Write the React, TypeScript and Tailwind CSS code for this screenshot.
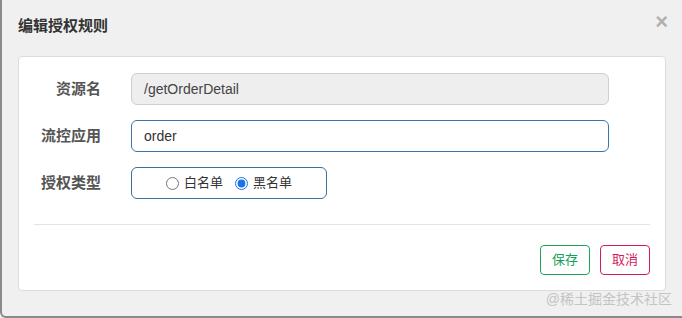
import { useState } from "react";

const FONT = "[font-family:'Liberation_Sans','Noto_Sans_CJK_SC',sans-serif]";

function Row({ label, children }: { label: string; children: React.ReactNode }) {
  return (
    <div className="flex h-8 items-center">
      <label className="w-[67px] shrink-0 text-right text-[15px] font-bold text-[#555]">{label}</label>
      <div className="ml-[30px]">{children}</div>
    </div>
  );
}

export default function App() {
  const [kind, setKind] = useState<"white" | "black">("black");

  return (
    <div className={`${FONT} h-[318px] w-[682px] overflow-hidden bg-[#f0f0f0]`}>
      <div className="relative h-full w-full rounded-bl-[6px] border-b-[2px] border-l-[2px] border-[#8a8a8a] bg-[#f0f0f0]">
        <div className="flex h-[56px] items-start justify-between pl-[16px] pr-[14px] pt-[15px]">
          <h3 className="text-[15px] font-bold leading-[22px] text-[#333]">编辑授权规则</h3>
          <button className="mt-[-4px] text-[22px] leading-none font-bold text-[#b0b0b0]">×</button>
        </div>

        <div className="ml-[16px] w-[648px] rounded-[4px] border border-[#dcdcdc] bg-white px-[15px] pt-[16px]">
          <div className="flex flex-col gap-[15px]">
            <Row label="资源名">
              <input
                readOnly
                value="/getOrderDetail"
                className="h-8 w-[478px] rounded-[6px] border border-[#cfcfcf] bg-[#eeeeee] px-3 text-[14px] text-[#444] outline-none"
              />
            </Row>
            <Row label="流控应用">
              <input
                defaultValue="order"
                className="h-8 w-[478px] rounded-[6px] border border-[#3a74a8] bg-white px-3 text-[14px] text-[#333] outline-none"
              />
            </Row>
            <Row label="授权类型">
              <div className="flex h-8 w-[196px] items-center justify-center gap-[12px] rounded-[6px] border border-[#3a6f9c] text-[13px] text-[#333]">
                <label className="flex items-center gap-[5px]">
                  <input
                    type="radio"
                    name="kind"
                    checked={kind === "white"}
                    onChange={() => setKind("white")}
                    className="m-0 size-[13px] accent-[#1a73e8]"
                  />
                  白名单
                </label>
                <label className="flex items-center gap-[5px]">
                  <input
                    type="radio"
                    name="kind"
                    checked={kind === "black"}
                    onChange={() => setKind("black")}
                    className="m-0 size-[13px] accent-[#1a73e8]"
                  />
                  黑名单
                </label>
              </div>
            </Row>
          </div>

          <div className="mt-[25px] border-t border-[#e3e3e3]" />

          <div className="flex justify-end gap-[10px] pb-[15px] pt-[20px]">
            <button className="h-[30px] w-[50px] rounded-[4px] border border-[#1ea25c] bg-white text-[13px] text-[#15a05a]">
              保存
            </button>
            <button className="h-[30px] w-[50px] rounded-[4px] border border-[#d41c5c] bg-white text-[13px] text-[#d41c5c]">
              取消
            </button>
          </div>
        </div>

        <span className="absolute bottom-[6px] right-[10px] text-[14px] text-[#c4c4c4]">@稀土掘金技术社区</span>
      </div>
    </div>
  );
}
